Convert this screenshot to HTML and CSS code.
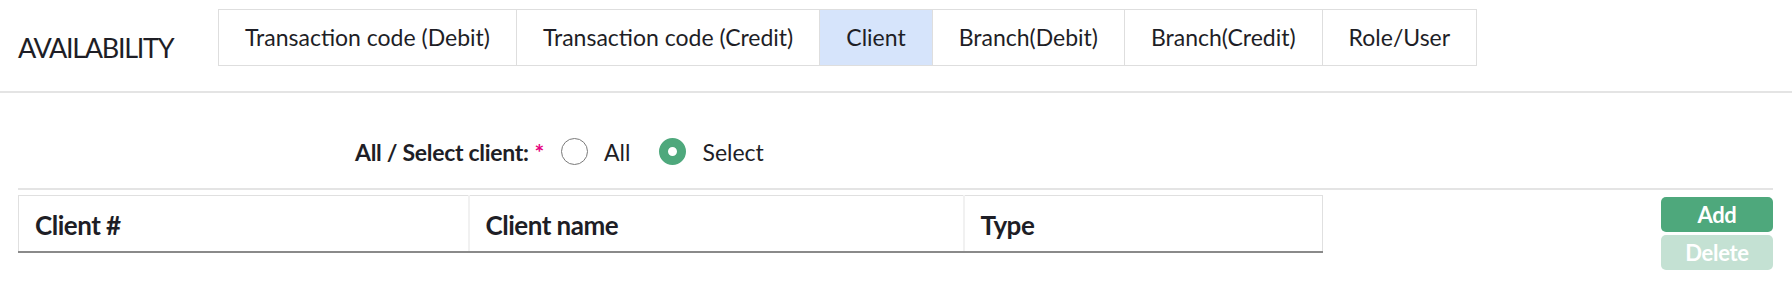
FILE: index.html
```html
<!DOCTYPE html>
<html lang="en">
<head>
  <meta charset="UTF-8">
  <title>availability</title>
  <link rel="stylesheet" href="styles.css">
</head>
<body>
  <div class="header">
    <div class="title">AVAILABILITY</div>
    <div class="tabs">
      <div class="tab">Transaction code (Debit)</div>
      <div class="tab">Transaction code (Credit)</div>
      <div class="tab active">Client</div>
      <div class="tab">Branch(Debit)</div>
      <div class="tab">Branch(Credit)</div>
      <div class="tab">Role/User</div>
    </div>
  </div>
  <div class="content">
    <div class="choose">
      <span class="label">All / Select client:<span class="req">*</span></span>
      <span class="radio"></span><span class="opt">All</span>
      <span class="radio checked"></span><span class="opt">Select</span>
    </div>
    <div class="list">
      <table class="grid">
        <thead>
          <tr>
            <th class="c1">Client #</th>
            <th class="c2">Client name</th>
            <th class="c3">Type</th>
          </tr>
        </thead>
      </table>
      <div class="actions">
        <div class="btn">Add</div>
        <div class="btn off">Delete</div>
      </div>
    </div>
  </div>
</body>
</html>
```
FILE: styles.css
```css
*{
  margin: 0;
  padding: 0;
  box-sizing: border-box;
}
body{
  font-family: Lato, "Liberation Sans", sans-serif;
  color: #1e1e26;
  background: #fff;
}
.header{
  display: flex;
  height: 93px;
  padding: 9px 0 0 18px;
  border-bottom: 2px solid #e4e4e4;
}
.header .title{
  width: 200px;
  margin-top: 28px;
  font-size: 27px;
  letter-spacing: -1.3px;
  line-height: 21px;
}
.tabs{
  display: flex;
  height: 57px;
  border: 1px solid #dedede;
}
.tabs .tab{
  padding: 0 26px;
  line-height: 55px;
  font-size: 23px;
  border-left: 1px solid #dedede;
}
.tabs .tab:first-child{
  border-left: none;
}
.tabs .tab.active{
  background: #d6e4fb;
}
.content{
  padding: 0 19px 0 18px;
}
.choose{
  display: flex;
  align-items: center;
  height: 97px;
  padding: 22px 0 0 337px;
  border-bottom: 2px solid #e4e4e4;
  font-size: 23px;
}
.choose .label{
  font-weight: bold;
  letter-spacing: -0.3px;
  margin-right: 17px;
}
.choose .req{
  color: #e6007e;
  margin-left: 6px;
}
.radio{
  width: 27px;
  height: 27px;
  border: 1px solid #7a7a7a;
  border-radius: 50%;
  background: #fff;
  margin-right: 16px;
}
.radio.checked{
  border: 9px solid #4ea87c;
}
.choose .opt{
  margin-right: 29px;
}
.list{
  display: flex;
  align-items: flex-start;
  padding-top: 5px;
}
.grid{
  width: 1305px;
  border-collapse: collapse;
  border: 1px solid #e0e0e0;
}
.grid th{
  height: 56px;
  text-align: left;
  font-size: 26px;
  font-weight: bold;
  letter-spacing: -0.5px;
  padding: 4px 16px 0;
  border-bottom: 2px solid #8a8a8a;
  border-left: 2px solid #f1f1f1;
}
.grid th.c1{
  width: 450px;
  border-left: none;
}
.grid th.c2{
  width: 495px;
}
.actions{
  margin-left: auto;
  padding-top: 2px;
}
.actions .btn{
  width: 112px;
  height: 35px;
  margin-bottom: 3px;
  border-radius: 5px;
  background: #4ea87c;
  color: #fff;
  font-size: 22px;
  font-weight: bold;
  text-align: center;
  line-height: 35px;
  letter-spacing: -0.3px;
}
.actions .btn.off{
  background: #c4e1d3;
}
```
